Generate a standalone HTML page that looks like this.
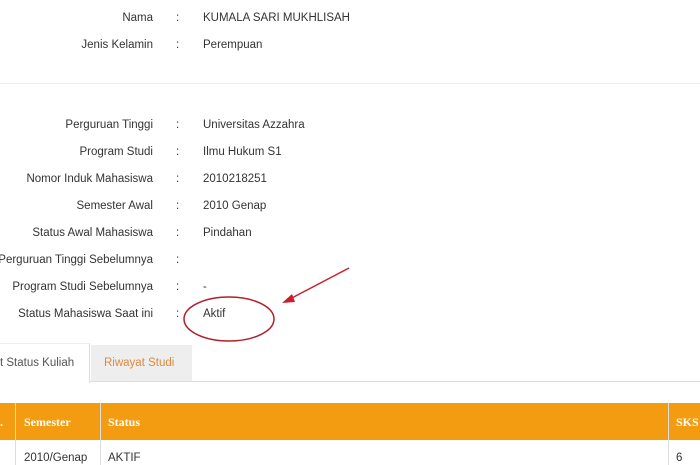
<html><head><style>
body{margin:0;width:700px;height:465px;background:#fff;font-family:"Liberation Sans",sans-serif;font-size:11.5px;color:#333;position:relative;overflow:hidden}
.l{position:absolute;right:547px;text-align:right;white-space:nowrap}
.c{position:absolute;left:176px}
.v{position:absolute;left:203px;white-space:nowrap}
.a{position:absolute}
</style></head><body>
<div class="a" style="left:0;top:83px;width:700px;border-top:1px solid #eee"></div>
<div style="position:absolute;top:12px;width:700px">
<div class="l" style="top:0">Nama</div><div class="c" style="top:0">:</div><div class="v" style="top:0">KUMALA SARI MUKHLISAH</div>
<div class="l" style="top:27px">Jenis Kelamin</div><div class="c" style="top:27px">:</div><div class="v" style="top:27px">Perempuan</div>
<div class="l" style="top:107px">Perguruan Tinggi</div><div class="c" style="top:107px">:</div><div class="v" style="top:107px">Universitas Azzahra</div>
<div class="l" style="top:134px">Program Studi</div><div class="c" style="top:134px">:</div><div class="v" style="top:134px">Ilmu Hukum S1</div>
<div class="l" style="top:161px">Nomor Induk Mahasiswa</div><div class="c" style="top:161px">:</div><div class="v" style="top:161px">2010218251</div>
<div class="l" style="top:188px">Semester Awal</div><div class="c" style="top:188px">:</div><div class="v" style="top:188px">2010 Genap</div>
<div class="l" style="top:215px">Status Awal Mahasiswa</div><div class="c" style="top:215px">:</div><div class="v" style="top:215px">Pindahan</div>
<div class="l" style="top:242px">Perguruan Tinggi Sebelumnya</div><div class="c" style="top:242px">:</div>
<div class="l" style="top:269px">Program Studi Sebelumnya</div><div class="c" style="top:269px">:</div><div class="v" style="top:269px">-</div>
<div class="l" style="top:296px">Status Mahasiswa Saat ini</div><div class="c" style="top:296px">:</div><div class="v" style="top:296px">Aktif</div>
</div>
<svg class="a" style="left:0;top:0" width="700" height="465">
<ellipse cx="229" cy="319" rx="45" ry="22" fill="none" stroke="#b0202a" stroke-width="1.5"/>
<line x1="349" y1="268" x2="288" y2="300" stroke="#c8202a" stroke-width="1.5"/>
<polygon points="282,303 292,294 295,302" fill="#c8202a"/>
</svg>
<div class="a" style="left:0;top:381px;width:700px;border-top:1px solid #ddd"></div>
<div class="a" style="left:0;top:343px;width:89px;height:39px;background:#fff;border-right:1px solid #ddd;border-top:1px solid #eee"></div>
<div class="a" style="left:0;top:357px;color:#555">t Status Kuliah</div>
<div class="a" style="left:91px;top:345px;width:101px;height:36px;background:#eee"></div>
<div class="a" style="left:104px;top:357px;color:#e08a3c">Riwayat Studi</div>
<div class="a" style="left:0;top:403px;width:700px;height:37px;background:#f39c12"></div>
<div class="a" style="left:15px;top:403px;height:62px;border-left:1px solid #ddd"></div>
<div class="a" style="left:100px;top:403px;height:62px;border-left:1px solid #ddd"></div>
<div class="a" style="left:668px;top:403px;height:62px;border-left:1px solid #ddd"></div>
<div class="a" style="left:0;top:415px;color:#fff;font-weight:bold;font-family:'Liberation Serif',serif;font-size:12px">.</div>
<div class="a" style="left:24px;top:415px;color:#fff;font-weight:bold;font-family:'Liberation Serif',serif;font-size:12px">Semester</div>
<div class="a" style="left:108px;top:415px;color:#fff;font-weight:bold;font-family:'Liberation Serif',serif;font-size:12px">Status</div>
<div class="a" style="left:676px;top:415px;color:#fff;font-weight:bold;font-family:'Liberation Serif',serif;font-size:12px">SKS</div>
<div class="a" style="left:24px;top:452px">2010/Genap</div>
<div class="a" style="left:108px;top:452px">AKTIF</div>
<div class="a" style="left:676px;top:452px">6</div>
</body></html>
